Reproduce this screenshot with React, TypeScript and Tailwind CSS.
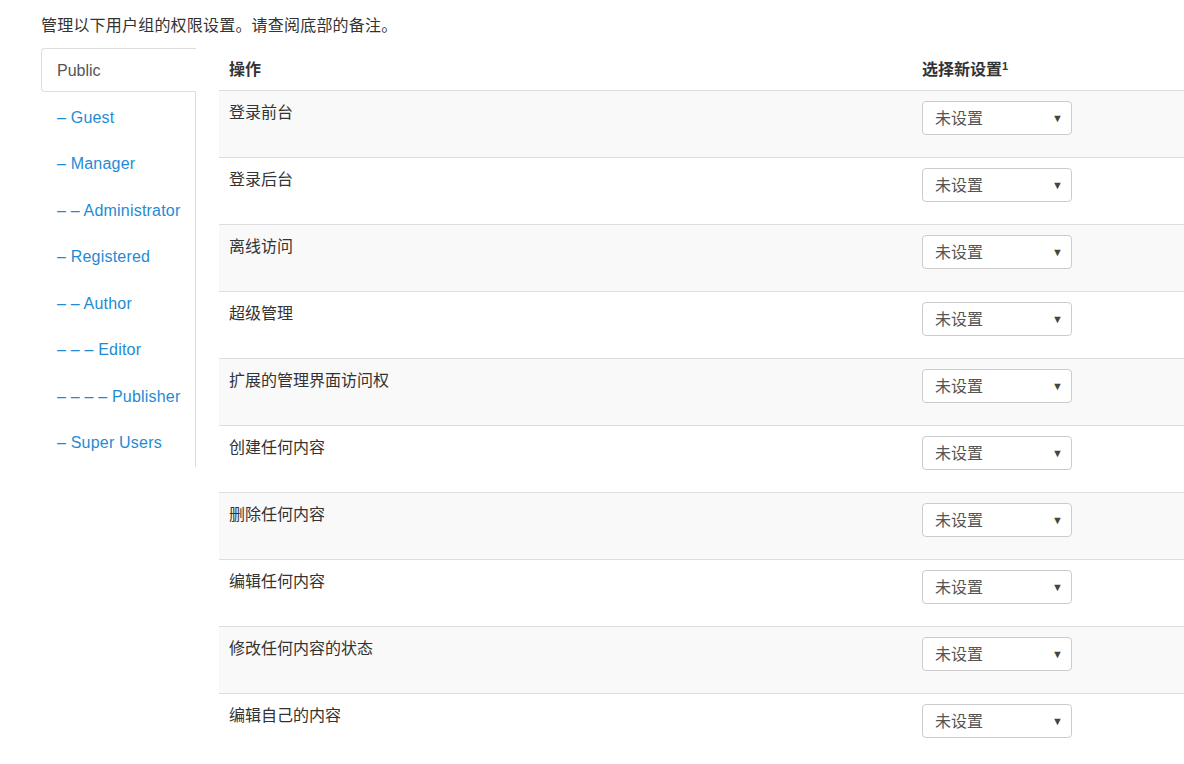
const groups = [
	"– Guest",
	"– Manager",
	"– – Administrator",
	"– Registered",
	"– – Author",
	"– – – Editor",
	"– – – – Publisher",
	"– Super Users",
];

const actions = [
	"登录前台",
	"登录后台",
	"离线访问",
	"超级管理",
	"扩展的管理界面访问权",
	"创建任何内容",
	"删除任何内容",
	"编辑任何内容",
	"修改任何内容的状态",
	"编辑自己的内容",
];

const SettingSelect = () => {
	return (
		<div className="flex h-[34px] w-[150px] items-center justify-between rounded-[4px] border border-[#cccccc] bg-white pl-3 pr-[8px] pt-[1px] text-[#555555]">
			<span>未设置</span>
			<span className="text-[11px] leading-none text-[#444444]">▼</span>
		</div>
	);
};

export default function App() {
	return (
		<div
			className="min-h-[764px] overflow-hidden bg-white pl-[41px] text-[16px] leading-[22px] text-[#333333]"
			style={{ fontFamily: '"Liberation Sans", "Noto Sans CJK SC", sans-serif' }}
		>
			<p className="pt-[15px] tracking-[0.2px]">管理以下用户组的权限设置。请查阅底部的备注。</p>
			<div className="mt-[11px] flex items-start">
				{/* group tabs */}
				<div className="w-[155px] shrink-0 border-r border-[#dddddd] pb-[3px]">
					<div className="-mr-px flex h-[44px] items-center rounded-l-[4px] border border-r-0 border-[#dddddd] bg-white pl-[15px] pt-[2px] text-[#555555]">
						Public
					</div>
					{groups.map((g) => (
						<div
							key={g}
							className="mt-[2.5px] flex h-[44px] items-center pl-[16px] pt-[2px] tracking-[0.2px] text-[#1f8bd4]"
						>
							{g}
						</div>
					))}
				</div>
				{/* actions table */}
				<div className="ml-[23px] flex-1">
					<div className="flex h-[42px] items-center pt-[2px] font-bold">
						<div className="w-[693px] pl-[10px]">操作</div>
						<div className="pl-[10px]">
							选择新设置<sup className="text-[11px]">1</sup>
						</div>
					</div>
					{actions.map((a, i) => (
						<div
							key={a}
							className={`flex h-[67px] items-start border-t border-[#dddddd] ${i % 2 === 0 ? "bg-[#f9f9f9]" : "bg-white"}`}
						>
							<div className="w-[693px] pl-[10px] pt-[11px]">{a}</div>
							<div className="pl-[10px] pt-[10px]">
								<SettingSelect />
							</div>
						</div>
					))}
				</div>
			</div>
		</div>
	);
}
